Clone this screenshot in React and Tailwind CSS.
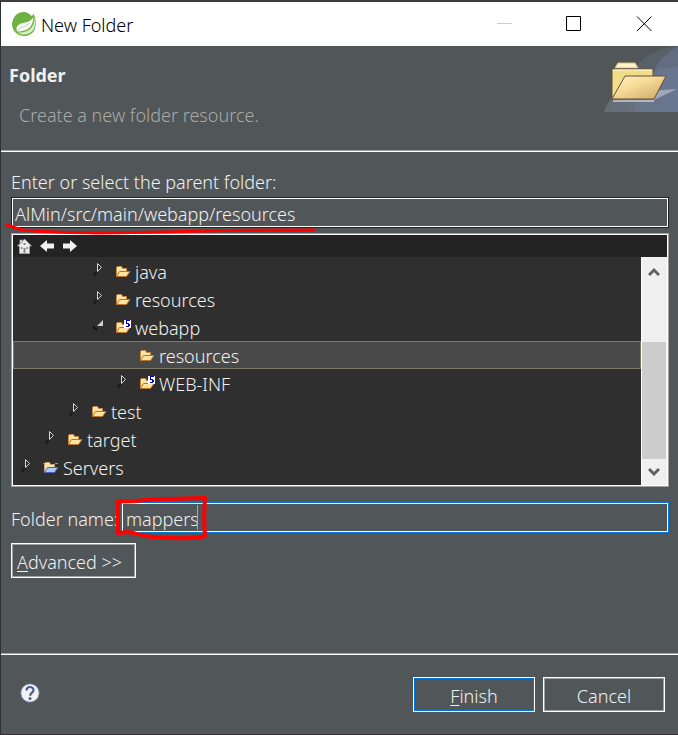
const tree = [
  { name: "java", level: 3, state: "closed" },
  { name: "resources", level: 3, state: "closed" },
  { name: "webapp", level: 3, state: "open", badge: true },
  { name: "resources", level: 4, selected: true },
  { name: "WEB-INF", level: 4, state: "closed", badge: true },
  { name: "test", level: 2, state: "closed" },
  { name: "target", level: 1, state: "closed" },
  { name: "Servers", level: 0, state: "closed", project: true },
];

function SpringLogo() {
  return (
    <svg viewBox="0 0 24 24" className="h-6 w-6 shrink-0">
      <path d="M21.500 1.500C21 3 20.500 3.500 19.800 4.200C17.500 1.500 14.500 0 11.500 0A11.800 11.800 0 0 0 0 12A12 12 0 0 0 12.500 24C17 24 20.500 21.500 22.500 18C24.500 13 24 6.500 21.500 1.500Z" fill="#6db33f" />
      <path d="M21.300 5C19 9.500 16 10 12 10.800C7.500 11.700 4.300 13.500 4.500 17.500C4.600 18.500 5 19.200 5.500 19.600C8 19.500 10.500 19.200 13 18.300C17.500 16.800 21 13.500 21.300 5Z" fill="#fff" />
      <path d="M6 20.600C12 20.800 17 19 20 15C22.200 12 22.300 8 21.700 4.500C23.400 9 23.600 13.500 21.700 17.300C19 21.500 14.500 23 10.500 22.500C8.500 22.200 7 21.500 6 20.600Z" fill="#fff" fillOpacity=".75" />
      <path d="M5.200 18.500C8 15.200 13 15 18 11" fill="none" stroke="#8cc368" strokeWidth=".7" />
    </svg>
  );
}

function BannerArt() {
  return (
    <svg viewBox="0 0 74 66" className="h-[66px] w-[74px] shrink-0">
      <defs>
        <linearGradient id="sky" x1="0" x2="1">
          <stop offset="0" stopColor="#666c74" />
          <stop offset="1" stopColor="#66748f" />
        </linearGradient>
        <linearGradient id="back" x1="0" y1="0" x2="0" y2="1">
          <stop offset="0" stopColor="#eedc86" />
          <stop offset="1" stopColor="#f3e48c" />
        </linearGradient>
        <linearGradient id="front" x1="0" y1="0" x2="1" y2="1">
          <stop offset="0" stopColor="#fff3c8" />
          <stop offset=".4" stopColor="#f8dc98" />
          <stop offset="1" stopColor="#c9a763" />
        </linearGradient>
      </defs>
      <path d="M32 20C42 9 56 1 74 0V66H32Z" fill="#596068" />
      <path d="M48 32C52 18 60 7 74 1V66H48Z" fill="#626d82" />
      <path d="M0 66C8 42 38 22 74 21V66Z" fill="url(#sky)" />
      <path d="M30 66C31 48 40 32 56 24L74 21V66Z" fill="#6b7892" fillOpacity=".6" />
      <path d="M8 54H50L73 43L58 44Z" fill="#b3b8c2" fillOpacity=".75" />
      <path d="M11 22L14 17H31L34 22Z" fill="#fff2c4" stroke="#d5c17d" />
      <path d="M8 23H49V53H8Z" fill="url(#back)" stroke="#6b4a3c" />
      <path d="M9 24H48" stroke="#fff9d6" />
      <path d="M21 30H62L50 53H8Z" fill="url(#front)" stroke="#6b4a3c" />
      <path d="M9 55H50" stroke="#c9ced6" strokeWidth="1.500" />
    </svg>
  );
}

function FolderIcon({ badge, project }) {
  return (
    <svg viewBox="0 0 16 16" className="h-4 w-4 shrink-0">
      <path d="M1.500 12V3.500L2.500 2.500H6.500L7.500 4.500H11.500V8" fill="#fbe3ac" stroke={project ? "#c9a07a" : "#c98a3c"} />
      <path
        d="M1.500 12.500L4.500 7.500H15L11.500 12.500Z"
        fill={project ? "#a9c8fa" : "#fde2a0"}
        stroke={project ? "#4a63b5" : "#b9752c"}
      />
      {project && <path d="M0 3.500H2M12 3.500H15" stroke="#a08aa8" />}
      {badge && (
        <g shapeRendering="crispEdges">
          <path d="M9 0H16V8H9Z" fill="#fff" />
          <path d="M11 0H15V1H12V3H14V4H15V6H14V7H11V6H13V4H11Z" fill="#0000d8" />
        </g>
      )}
    </svg>
  );
}

function Twisty({ state }) {
  return (
    <svg viewBox="0 0 22 20" className="h-5 w-[22px] shrink-0">
      {state === "closed" && (
        <>
          <path d="M0 14L4 10" stroke="#1f1f1f" strokeWidth="3" />
          <path d="M4.500 1.500V9.500L8.500 5.500Z" fill="#2a2a2a" stroke="#d8d8d8" />
        </>
      )}
      {state === "open" && (
        <>
          <path d="M-1 8L4 12" stroke="#111" strokeWidth="2" />
          <path d="M10 2V8H4Z" fill="#d0d0d0" />
        </>
      )}
    </svg>
  );
}

function TreeRow({ item }) {
  return (
    <li
      className={`flex h-7 items-center border pt-[2px] ${
        item.selected ? "border-[#7d7965] bg-[#494949]" : "border-transparent"
      }`}
      style={{ paddingLeft: 7 + item.level * 24 }}
    >
      <Twisty state={item.state} />
      <FolderIcon badge={item.badge} project={item.project} />
      <span className="pl-1">{item.name}</span>
    </li>
  );
}

function Toolbar() {
  return (
    <div className="flex h-[22px] items-center gap-2 bg-[#232323] pl-1">
      <button aria-label="Home">
        <svg viewBox="0 0 15 16" className="h-4 w-[15px]">
          <path d="M3 2H5V5H3ZM7.500 1L14.500 8H12.500V15.500H2.500V8H.5Z" fill="#ececec" stroke="#aaa" strokeWidth=".7" />
          <path d="M6.500 5H8.500V7H6.500ZM4 9H5.500V11H4ZM9.500 9H11V11H9.500ZM6.500 10H8.500V15H6.500Z" fill="#858585" />
        </svg>
      </button>
      <button aria-label="Back">
        <svg viewBox="0 0 15 14" className="h-[14px] w-[15px]">
          <path d="M0 7L7 1V4.500H14V9.500H7V13Z" fill="#f2f2f2" />
        </svg>
      </button>
      <button aria-label="Forward">
        <svg viewBox="0 0 15 14" className="h-[14px] w-[15px]">
          <path d="M14 7L7 1V4.500H0V9.500H7V13Z" fill="#f2f2f2" />
        </svg>
      </button>
    </div>
  );
}

function Scrollbar() {
  return (
    <div className="flex w-[26px] flex-col border-l border-white bg-[#f0f0f0] pr-px">
      <button aria-label="Scroll up" className="flex h-[29px] items-center justify-center">
        <svg viewBox="0 0 12 10" className="h-[10px] w-3">
          <path d="M1 8L6 3L11 8" fill="none" stroke="#606060" strokeWidth="3" />
        </svg>
      </button>
      <div className="flex-1" />
      <div className="h-[117px] bg-[#cdcdcd]" />
      <button aria-label="Scroll down" className="flex h-[26px] items-center justify-center">
        <svg viewBox="0 0 12 10" className="h-[10px] w-3">
          <path d="M1 2L6 7L11 2" fill="none" stroke="#606060" strokeWidth="3" />
        </svg>
      </button>
    </div>
  );
}

function TitleBar() {
  return (
    <div className="flex h-11 items-center bg-white pl-[11px] text-black">
      <SpringLogo />
      <h1 className="flex-1 pt-[2px] pl-[5px]">New Folder</h1>
      <button aria-label="Minimize" className="flex w-[70px] justify-center text-[#ccc]">
        <svg viewBox="0 0 17 16" className="h-4 w-[17px]">
          <path d="M2 7.500H17" stroke="currentColor" />
        </svg>
      </button>
      <button aria-label="Maximize" className="flex w-[70px] justify-center">
        <svg viewBox="0 0 17 16" className="h-4 w-[17px]">
          <path d="M1.500 .5H15.500V14.500H1.500Z" fill="none" stroke="currentColor" />
        </svg>
      </button>
      <button aria-label="Close" className="flex w-[70px] justify-center">
        <svg viewBox="0 0 17 16" className="h-4 w-[17px]">
          <path d="M2 .5L16.500 15M16.500 .5L2 15" stroke="currentColor" />
        </svg>
      </button>
    </div>
  );
}

export default function App() {
  return (
    <div className="flex min-h-screen flex-col border-t-2 border-b border-l border-t-[#3b3e40] border-b-[#353134] border-l-[#2c3235] bg-[#515658] font-['Noto_Sans',sans-serif] text-lg/7 font-light text-[#f0f0f0]">
      <TitleBar />

      <header className="flex h-[106px] items-start justify-between border-b border-white inset-shadow-[0_-1px_0_#a0a0a0]">
        <div className="pt-[15px] pl-2">
          <h2 className="font-bold">Folder</h2>
          <p className="pt-3 pl-[10px] text-[#a9a9a9]">Create a new folder resource.</p>
        </div>
        <BannerArt />
      </header>

      <main className="flex flex-1 flex-col pt-4 pr-[9px] pl-[10px]">
        <label htmlFor="parent">Enter or select the parent folder:</label>
        <div className="relative mt-px">
          <input
            id="parent"
            defaultValue="AlMin/src/main/webapp/resources"
            className="block h-[31px] w-full border border-[#222] bg-transparent px-[3px] pt-[2px] inset-ring inset-ring-white outline-none"
          />
          <svg viewBox="0 0 320 20" className="pointer-events-none absolute top-6 -left-2 z-10 h-5 w-80">
            <path
              d="M4 4C10 6 15 8 20 9C65 13 110 12 165 11C205 9 250 9 311 9"
              fill="none"
              stroke="#f00"
              strokeWidth="3"
              strokeLinecap="round"
            />
          </svg>
        </div>

        <div className="mt-[5px] border border-[#a0a0a0]">
          <div className="border border-white">
            <Toolbar />
            <div className="flex bg-[#2f2f2f]">
              <ul className="flex-1 pb-1">
                {tree.map((item, i) => (
                  <TreeRow key={i} item={item} />
                ))}
              </ul>
              <Scrollbar />
            </div>
          </div>
        </div>

        <div className="mt-[15px] flex items-center">
          <label htmlFor="name" className="w-[110px] shrink-0 pt-[2px] whitespace-nowrap">
            Folder name:
          </label>
          <div className="relative flex-1">
            <input
              id="name"
              defaultValue="mappers"
              className="block h-[31px] w-full border border-[#0078d7] bg-transparent px-1 pt-[2px] inset-ring inset-ring-white outline-none"
            />
            <span className="absolute top-[3px] left-[76px] h-[25px] w-px bg-[#a9a9a9]" />
            <svg viewBox="0 0 96 48" className="pointer-events-none absolute -top-2 -left-2 h-12 w-24">
              <path
                d="M5 7C20 9 38 4 55 5L92 4C91 18 91 30 92 42C80 46 55 44 40 43C30 42 25 40 16 38L5 39Z"
                fill="none"
                stroke="#f00"
                strokeWidth="4"
                strokeLinejoin="round"
              />
            </svg>
          </div>
        </div>

        <button className="mt-[10px] h-[35px] w-[125px] border border-white px-[5px] pt-[2px] text-left whitespace-nowrap inset-ring inset-ring-[#a0a0a0]">
          <u className="underline-offset-2">A</u>dvanced &gt;&gt;
        </button>
      </main>

      <footer className="flex h-[81px] items-center gap-2 border-t border-[#a0a0a0] pr-[13px] pl-[19px] inset-shadow-[0_1px_0_#fff]">
        <button aria-label="Help" className="mr-auto pb-[3px]">
          <svg viewBox="0 0 20 20" className="h-5 w-5">
            <circle cx="10" cy="10" r="9.300" fill="#f2f2f2" stroke="#5f7294" />
            <path d="M6.500 7.500C6.500 2.800 13.700 3 13.500 7.200C13.400 9.800 10.200 9.500 10.200 12.700" fill="none" stroke="#4c5f8c" strokeWidth="2.200" />
            <circle cx="10" cy="15.500" r="1.500" fill="#4c5f8c" />
          </svg>
        </button>
        <button className="h-[35px] w-[122px] border border-white pt-1 inset-ring inset-ring-[#0078d7]">
          <u className="underline-offset-2">F</u>inish
        </button>
        <button className="h-[35px] w-[122px] border border-white pt-1 inset-ring inset-ring-[#a0a0a0]">Cancel</button>
      </footer>
    </div>
  );
}
